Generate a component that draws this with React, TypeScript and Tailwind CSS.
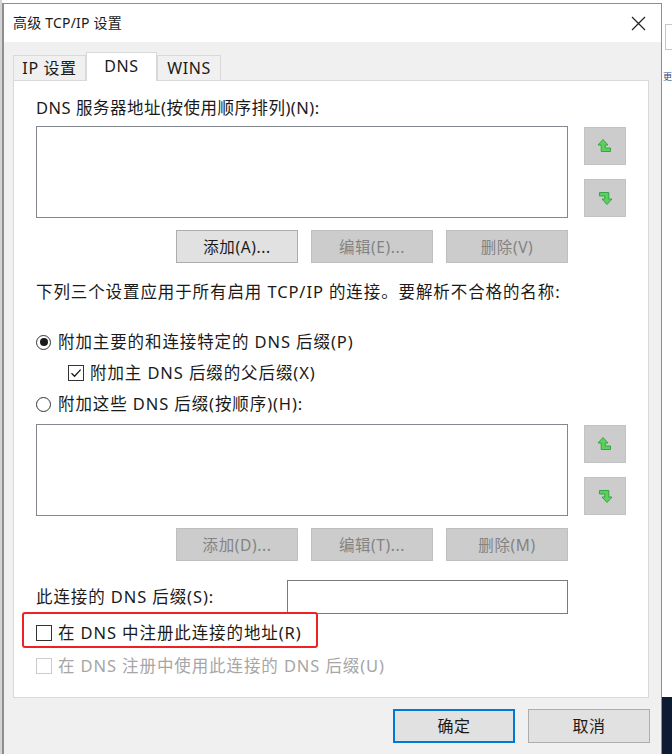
import React from "react";

function UpIcon() {
  return (
    <svg width="16" height="16" viewBox="0 0 16 16">
      <polygon
        points="6,1.5 11,7 8.2,7 8.2,10 13.5,10 13.5,13.5 4.2,13.5 4.2,7 1,7"
        fill="#5ad25a"
        stroke="#2f9e3f"
        strokeWidth="0.9"
        strokeLinejoin="round"
      />
    </svg>
  );
}

function DownIcon() {
  return (
    <svg width="16" height="16" viewBox="0 0 16 16">
      <polygon
        points="2.5,2.5 11.8,2.5 11.8,9 15,9 10,14.5 5,9 7.8,9 7.8,6 2.5,6"
        fill="#5ad25a"
        stroke="#2f9e3f"
        strokeWidth="0.9"
        strokeLinejoin="round"
      />
    </svg>
  );
}

function ArrowBtn({ down }: { down?: boolean }) {
  return (
    <div className="w-[42px] h-[38px] bg-[#cccccc] border border-[#c2c2c2] flex items-center justify-center">
      {down ? <DownIcon /> : <UpIcon />}
    </div>
  );
}

function Btn({ label, disabled }: { label: string; disabled?: boolean }) {
  return (
    <div
      className={
        disabled
          ? "w-[122px] h-[33px] bg-[#cccccc] border border-[#bfbfbf] text-[#838383] flex items-center justify-center text-[15.5px] tracking-[0.6px]"
          : "w-[122px] h-[33px] bg-[#e1e1e1] border border-[#adadad] text-[#1a1a1a] flex items-center justify-center text-[15.5px] tracking-[0.6px]"
      }
    >
      {label}
    </div>
  );
}

function Radio({ checked }: { checked?: boolean }) {
  return (
    <div className="w-[15px] h-[15px] shrink-0 rounded-full border border-[#333333] bg-white flex items-center justify-center">
      {checked && <div className="w-[8px] h-[8px] rounded-full bg-[#1a1a1a]" />}
    </div>
  );
}

function Check({ checked, disabled }: { checked?: boolean; disabled?: boolean }) {
  return (
    <div
      className={
        disabled
          ? "w-[16px] h-[16px] shrink-0 border border-[#cccccc] bg-white"
          : "w-[16px] h-[16px] shrink-0 border border-[#333333] bg-white flex items-center justify-center"
      }
    >
      {checked && (
        <svg width="12" height="12" viewBox="0 0 12 12">
          <path d="M1.5 6.2 L4.6 9.2 L10.6 2.6" fill="none" stroke="#1a1a1a" strokeWidth="1.3" />
        </svg>
      )}
    </div>
  );
}

function ListRow() {
  return (
    <div className="flex">
      <div className="w-[532px] h-[92px] bg-white border border-[#828790]" />
      <div className="ml-[16px] mt-px flex flex-col gap-[14px]">
        <ArrowBtn />
        <ArrowBtn down />
      </div>
    </div>
  );
}

export default function App() {
  return (
    <div className="w-[672px] h-[754px] overflow-hidden bg-white flex font-['Noto_Sans','Noto_Sans_CJK_SC',sans-serif] text-[#1a1a1a]">
      <div className="w-[2px] bg-[#d4d4d4] shrink-0" />
      <div className="mt-[3px] w-[660px] shrink-0 border-l-2 border-t border-r border-[#8e8e8e] flex flex-col bg-[#f0f0f0]">
        {/* title bar */}
        <div className="h-[38px] bg-white flex items-center justify-between pl-[9px] pr-[15px]">
          <span className="text-[14px] leading-[20px] tracking-[0.2px]">高级 TCP/IP 设置</span>
          <svg width="15" height="15" viewBox="0 0 15 15">
            <path d="M1 1 L14 14 M14 1 L1 14" stroke="#222222" strokeWidth="1.2" />
          </svg>
        </div>
        {/* body */}
        <div className="flex flex-col pt-[10px] pl-[9px] pr-[12px]">
          <div className="flex items-end h-[28px] text-[16px] tracking-[0.6px]">
            <div className="w-[73px] h-[25px] border border-b-0 border-[#d9d9d9] bg-[#f0f0f0] flex items-center justify-center">
              IP 设置
            </div>
            <div className="relative z-10 w-[71px] h-[29px] -mb-px border border-b-0 border-[#d9d9d9] bg-white flex items-start justify-center pt-[1px]">
              DNS
            </div>
            <div className="w-[64px] h-[25px] border border-b-0 border-[#d9d9d9] bg-[#f0f0f0] flex items-center justify-center">
              WINS
            </div>
          </div>
          <div className="h-[618px] bg-white border border-[#d9d9d9] flex flex-col pl-[22px] text-[16.5px] leading-[20px] tracking-[0.9px]">
            <div className="mt-[17px] tracking-[0.5px]">DNS 服务器地址(按使用顺序排列)(N):</div>
            <div className="mt-[8px]">
              <ListRow />
            </div>
            <div className="mt-[12px] ml-[140px] flex gap-[13px]">
              <Btn label="添加(A)..." />
              <Btn label="编辑(E)..." disabled />
              <Btn label="删除(V)" disabled />
            </div>
            <div className="mt-[19px] whitespace-nowrap">下列三个设置应用于所有启用 TCP/IP 的连接。要解析不合格的名称:</div>
            <div className="mt-[30px] flex items-center gap-[7px]">
              <Radio checked />
              <span>附加主要的和连接特定的 DNS 后缀(P)</span>
            </div>
            <div className="mt-[11px] ml-[32px] flex items-center gap-[6px]">
              <Check checked />
              <span>附加主 DNS 后缀的父后缀(X)</span>
            </div>
            <div className="mt-[11px] flex items-center gap-[7px]">
              <Radio />
              <span>附加这些 DNS 后缀(按顺序)(H):</span>
            </div>
            <div className="mt-[10px]">
              <ListRow />
            </div>
            <div className="mt-[12px] ml-[140px] flex gap-[13px]">
              <Btn label="添加(D)..." disabled />
              <Btn label="编辑(T)..." disabled />
              <Btn label="删除(M)" disabled />
            </div>
            <div className="mt-[19px] flex items-center">
              <span className="w-[251px]">此连接的 DNS 后缀(S):</span>
              <div className="w-[281px] h-[34px] bg-white border border-[#7a7a7a]" />
            </div>
            <div className="relative mt-[9px] flex items-center gap-[6px]">
              <Check />
              <span>在 DNS 中注册此连接的地址(R)</span>
              <div className="absolute left-[-14px] top-[-11px] w-[296px] h-[36px] border-2 border-[#ee2222] rounded-[3px]" />
            </div>
            <div className="mt-[13px] flex items-center gap-[6px] text-[#a6a6a6]">
              <Check disabled />
              <span>在 DNS 注册中使用此连接的 DNS 后缀(U)</span>
            </div>
          </div>
          <div className="mt-[11px] flex justify-end gap-[13px] text-[16px] tracking-[0.6px]">
            <div className="w-[122px] h-[34px] bg-[#e1e1e1] border-2 border-[#0078d7] flex items-center justify-center">确定</div>
            <div className="w-[122px] h-[34px] bg-[#e1e1e1] border border-[#adadad] flex items-center justify-center mr-[-1px]">取消</div>
          </div>
        </div>
      </div>
      <div className="flex-1 flex flex-col">
        <div className="mt-[24px] ml-[3px] h-[26px] border border-r-0 border-[#c8c8c8]" />
        <div className="mt-[20px] ml-[1px] text-[9px] leading-[14px] text-[#2a4a80] overflow-hidden whitespace-nowrap">更</div>
        <div className="flex-1" />
        <div className="h-[57px] bg-[#0d1b33]" />
      </div>
    </div>
  );
}
